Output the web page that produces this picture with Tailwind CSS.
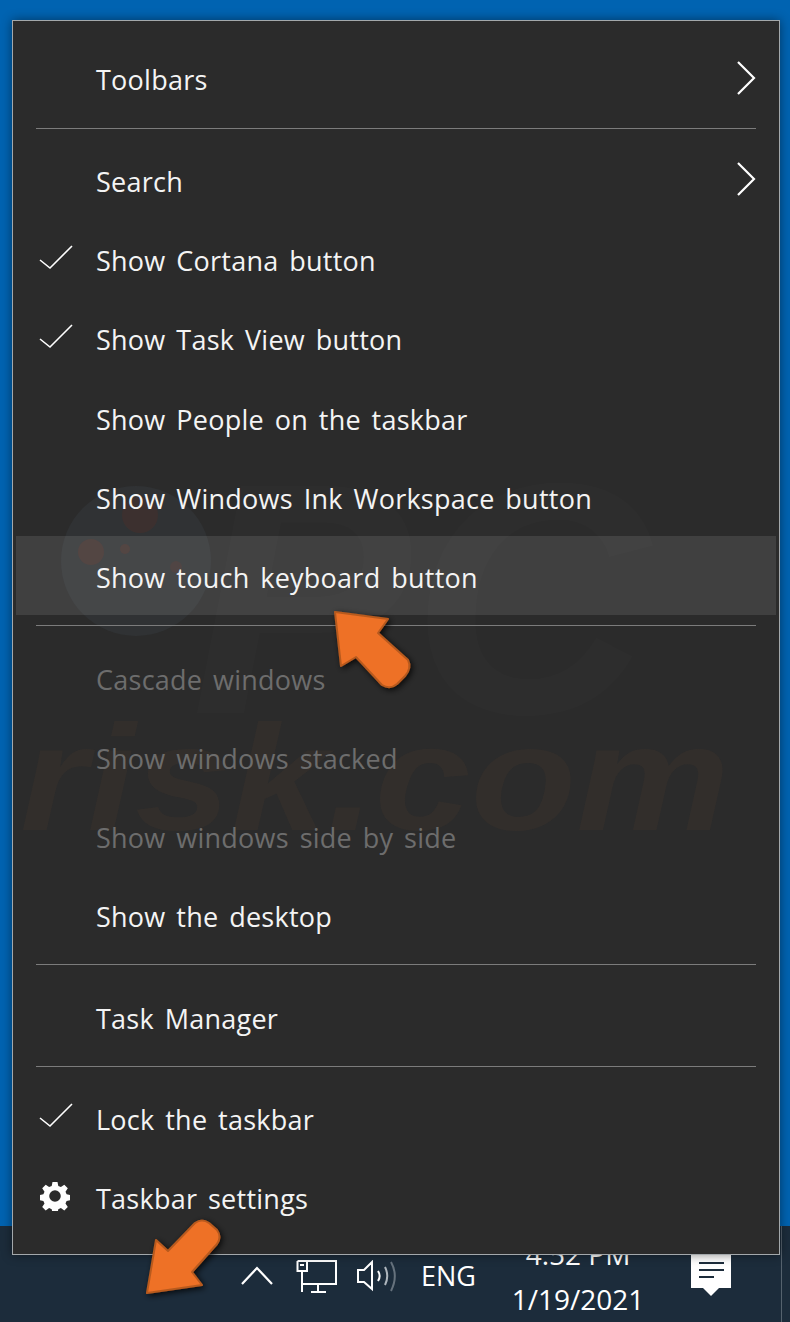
<!DOCTYPE html>
<html lang="en">
<head>
  <meta charset="UTF-8">
  <title>Taskbar context menu</title>
  <script src="https://cdn.jsdelivr.net/npm/@tailwindcss/browser@4"></script>
</head>
<body class="m-0">
  <div class="relative h-[1322px] w-[790px] overflow-hidden bg-[#0063b1] font-['Open_Sans',sans-serif] text-white">

    <!-- Taskbar -->
    <div class="absolute inset-x-0 bottom-0 flex h-[96px] items-start bg-[#1c2c3b] pl-[241px]">
      <svg class="mt-[38px] h-[24px] w-[32px]" viewBox="0 0 32 24" fill="none" stroke="#fff" stroke-width="2.2"><path d="M1 20 L16 4 L31 20"/></svg>
      <svg class="ml-[23px] mt-[32px] h-[36px] w-[42px]" viewBox="0 0 42 36" fill="none" stroke="#fff" stroke-width="2"><path d="M1.5 3H40V26H6M1.5 3V13H11V3M6 13V34M15 34H30M22 26V34"/><path d="M4 7H8"/></svg>
      <svg class="ml-[18px] mt-[34px] h-[32px] w-[42px]" viewBox="0 0 42 32" fill="none" stroke="#fff" stroke-width="2"><path d="M2 10H8L16 2V29L8 22H2Z"/><path d="M22 11C24 14 24 18 22 21"/><path d="M29 7C32 13 32 19 29 25" stroke="#aeb6bd"/><path d="M35 2C40 11 40 21 35 31" stroke="#66727d"/></svg>
      <span class="ml-[23px] mt-[28px] text-[27px] leading-[44px]">ENG</span>
      <div class="ml-[36px] flex w-[132px] flex-col items-center text-[28px]">
        <span class="mt-[8px] leading-[40px]">4:52 PM</span>
        <span class="mt-[5px] leading-[40px]">1/19/2021</span>
      </div>
      <div class="relative ml-[47px] mt-[28px] flex h-[34px] w-[40px] flex-col gap-[5px] bg-white px-[8px] pt-[8px]">
        <div class="h-[2px] w-[25px] bg-[#1c2c3b]"></div>
        <div class="h-[2px] w-[25px] bg-[#1c2c3b]"></div>
        <div class="h-[2px] w-[15px] bg-[#1c2c3b]"></div>
        <div class="absolute bottom-[-8px] left-[12px] size-0 border-x-[8px] border-t-[8px] border-x-transparent border-t-white"></div>
      </div>
      <div class="absolute bottom-0 right-[8px] top-0 w-[1px] bg-[#55626e]"></div>
    </div>

    <!-- Context menu -->
    <div class="absolute left-[12px] top-[20px] h-[1235px] w-[768px] overflow-hidden border border-[#a3a8ab] bg-[#2b2b2b] pt-[17px] text-[27px] tracking-[0.25px] text-[#f4f4f4] [word-spacing:3.5px] shadow-[0_0_10px_rgba(0,0,0,0.45)]">

      <!-- pcrisk watermark -->
      <div class="pointer-events-none absolute left-[48px] top-[465px] size-[150px] rounded-full bg-[#3a4148]/30"></div>
      <div class="pointer-events-none absolute left-[109px] top-[476px] size-[36px] rounded-full bg-[#5a3026]/30"></div>
      <div class="pointer-events-none absolute left-[65px] top-[518px] size-[26px] rounded-full bg-[#5a3026]/40"></div>
      <div class="pointer-events-none absolute left-[107px] top-[523px] size-[10px] rounded-full bg-[#5a3026]/40"></div>
      <div class="pointer-events-none absolute left-[157px] top-[540px] size-[12px] rounded-full bg-[#5a3026]/30"></div>
      <span class="pointer-events-none absolute left-[178px] top-[413px] font-['Liberation_Sans',sans-serif] text-[330px] font-bold italic leading-none tracking-normal text-white/[0.012] [word-spacing:0]">PC</span>
      <span class="pointer-events-none absolute left-[7px] top-[682px] origin-left scale-x-[1.15] font-['Liberation_Sans',sans-serif] text-[150px] font-bold italic leading-none tracking-normal text-[#c2743a]/[0.05] [word-spacing:0]">risk.com</span>

      <div class="relative flex h-[79.25px] items-center pl-[83px] pt-[5px]">
        <span class="flex-1">Toolbars</span>
        <svg class="mr-[23px] mt-[-5px] h-[34px] w-[20px]" viewBox="0 0 20 34" fill="none" stroke="#fff" stroke-width="2.2"><path d="M2 1L18 17L2 33"/></svg>
      </div>
      <div class="relative mx-[23px] my-[10.5px] h-[1px] bg-[#7c7c7c]"></div>
      <div class="relative flex h-[79.25px] items-center pl-[83px] pt-[7px]">
        <span class="flex-1">Search</span>
        <svg class="mr-[23px] mt-[-7px] h-[34px] w-[20px]" viewBox="0 0 20 34" fill="none" stroke="#fff" stroke-width="2.2"><path d="M2 1L18 17L2 33"/></svg>
      </div>
      <div class="relative flex h-[79.25px] items-center pl-[83px] pt-[7px]">
        <svg class="absolute left-[26px] top-[26px] h-[26px] w-[34px]" viewBox="0 0 34 26" fill="none" stroke="#fff" stroke-width="1.6"><path d="M1 15L11 23L33 1"/></svg>
        <span>Show Cortana button</span>
      </div>
      <div class="relative flex h-[79.25px] items-center pl-[83px] pt-[6px]">
        <svg class="absolute left-[26px] top-[26px] h-[26px] w-[34px]" viewBox="0 0 34 26" fill="none" stroke="#fff" stroke-width="1.6"><path d="M1 15L11 23L33 1"/></svg>
        <span>Show Task View button</span>
      </div>
      <div class="relative flex h-[79.25px] items-center pl-[83px] pt-[7px]"><span>Show People on the taskbar</span></div>
      <div class="relative flex h-[79.25px] items-center pl-[83px] pt-[7px]"><span>Show Windows Ink Workspace button</span></div>
      <div class="relative mx-[3px] flex h-[79.25px] items-center bg-white/[0.10] pl-[80px] pt-[7px]"><span>Show touch keyboard button</span></div>
      <div class="relative mx-[23px] my-[10.5px] h-[1px] bg-[#7c7c7c]"></div>
      <div class="relative flex h-[79.25px] items-center pl-[83px] pt-[7px] text-[#6d6d6d]"><span>Cascade windows</span></div>
      <div class="relative flex h-[79.25px] items-center pl-[83px] pt-[7px] text-[#6d6d6d]"><span>Show windows stacked</span></div>
      <div class="relative flex h-[79.25px] items-center pl-[83px] pt-[7px] text-[#6d6d6d]"><span>Show windows side by side</span></div>
      <div class="relative flex h-[79.25px] items-center pl-[83px] pt-[7px]"><span>Show the desktop</span></div>
      <div class="relative mx-[23px] my-[10.5px] h-[1px] bg-[#7c7c7c]"></div>
      <div class="relative flex h-[79.25px] items-center pl-[83px] pt-[7px]"><span>Task Manager</span></div>
      <div class="relative mx-[23px] my-[10.5px] h-[1px] bg-[#7c7c7c]"></div>
      <div class="relative flex h-[79.25px] items-center pl-[83px] pt-[7px]">
        <svg class="absolute left-[26px] top-[26px] h-[26px] w-[34px]" viewBox="0 0 34 26" fill="none" stroke="#fff" stroke-width="1.6"><path d="M1 15L11 23L33 1"/></svg>
        <span>Lock the taskbar</span>
      </div>
      <div class="relative flex h-[79.25px] items-center pl-[83px] pt-[7px]">
        <svg class="absolute left-[27px] top-[25px] size-[30px]" viewBox="0 0 30 30" fill="#fff">
          <path fill-rule="evenodd" d="M12.5 1h5l.8 4 2.6 1.1 3.4-2.3 3.5 3.5-2.3 3.4 1.1 2.6 4 .8v5l-4 .8-1.1 2.6 2.3 3.4-3.5 3.5-3.4-2.3-2.6 1.1-.8 4h-5l-.8-4-2.6-1.1-3.4 2.3-3.5-3.5 2.3-3.4-1.1-2.6-4-.8v-5l4-.8 1.1-2.6-2.3-3.4 3.5-3.5 3.4 2.3 2.6-1.1zM15 9.2a5.8 5.8 0 1 0 0 11.6a5.8 5.8 0 0 0 0-11.6z"/>
        </svg>
        <span>Taskbar settings</span>
      </div>
    </div>

    <!-- Annotation arrows -->
    <svg class="pointer-events-none absolute inset-0 size-full" viewBox="0 0 790 1322">
      <defs>
        <filter id="arrowShadow" x="-30%" y="-30%" width="160%" height="160%">
          <feDropShadow dx="2" dy="2" stdDeviation="3" flood-color="#000" flood-opacity="0.8"/>
        </filter>
      </defs>
      <path filter="url(#arrowShadow)" fill="#ee7127" stroke="#b85a1f" stroke-width="2" stroke-linejoin="round" d="M335 612L388 619L378 633L408 660Q412 668 405 676L397 684Q390 690 382 685L356 657L341 666Z"/>
      <path filter="url(#arrowShadow)" fill="#ee7127" stroke="#b85a1f" stroke-width="2" stroke-linejoin="round" d="M147 1293L156 1240L168 1251L195 1223Q202 1218 209 1223L217 1230Q222 1237 217 1244L192 1272L202 1285Z"/>
    </svg>
  </div>
</body>
</html>
